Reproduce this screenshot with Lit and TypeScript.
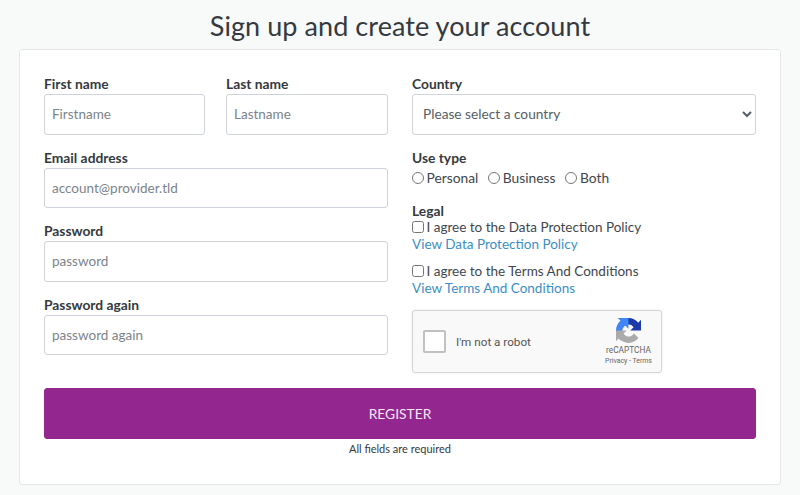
import { LitElement, html, css } from "lit";
import { customElement } from "lit/decorators.js";

@customElement("app-root")
export class AppRoot extends LitElement {
  static styles = css`
    :host { display: block; width: 800px; height: 495px; overflow: hidden; background: #f8f9f9; color: #343a40;
      font-family: "Lato", "Noto Sans", sans-serif; font-size: 14px; box-sizing: border-box; }
    * { box-sizing: border-box; }
    h1 { margin: 0; height: 49px; padding-top: 9px; font-size: 27px; line-height: 34px; font-weight: 400; text-align: center; color: #343a40; letter-spacing: 0.07px; }
    .card { margin: 0 19px; height: 435.5px; background: #fff; border: 1px solid #e4e7ea; border-radius: 3px; padding: 25px 24px 0; }
    .cols { display: grid; grid-template-columns: 344px 344px; column-gap: 24px; }
    .left { display: flex; flex-direction: column; }
    .pair { display: grid; grid-template-columns: 161px 162px; column-gap: 21px; }
    .field { display: flex; flex-direction: column; margin-bottom: 14px; }
    .t { font-weight: 700; font-size: 13.8px; line-height: 18px; margin-bottom: 1px; color: #343a40; display: block; }
    input.c, select { width: 100%; height: 40.5px; border: 1px solid #ced4da; border-radius: 3px; background: #fff; padding: 0 7px; font: inherit; font-size: 13.5px; color: #6c757d; outline: none; }
    input.c::placeholder { color: #7c848b; opacity: 1; }
    select { padding: 0 6px 2px; color: #565e66; font-size: 13.7px; }
    .lbl { display: inline-flex; align-items: center; font-size: 13.8px; color: #3f464d; line-height: 19px; }
    .radios { display: flex; gap: 10px; height: 20px; margin-bottom: 15.4px; }
    input[type=radio], input[type=checkbox] { margin: 0 2.5px 0 0; width: 12px; height: 12px; }
    .legal-t { line-height: 15px; margin-top: 2px; margin-bottom: 1px; }
    .rowc { display: flex; align-items: center; height: 17px; font-size: 13.5px; color: #3f464d; }
    a { color: #3b8fc7; text-decoration: none; font-size: 13.5px; line-height: 16px; display: block; margin-bottom: 11px; }
    .captcha { width: 250px; height: 63px; margin-top: 14.5px; background: #f9f9f9; border: 1px solid #d6d6d6; border-radius: 3px; box-shadow: 0 0 3px rgba(0,0,0,.08); display: flex; align-items: center; padding: 0 6.5px 0 10px; font-family: "Roboto", sans-serif; }
    .box { width: 23px; height: 23px; background: #fff; border: 2px solid #c1c1c1; border-radius: 2px; margin-right: 10px; }
    .rb { font-size: 11.7px; color: #555; }
    .brand { margin-left: auto; width: 52px; display: flex; flex-direction: column; align-items: center; color: #666; }
    .brand svg { width: 25px; height: 25px; margin-bottom: 2px; }
    .brand .n { font-size: 8.3px; line-height: 11px; }
    .brand .p { font-size: 6.9px; line-height: 10px; white-space: nowrap; }
    button { display: block; width: 100%; height: 51px; margin-top: 14.4px; background: #93278f; border: 1px solid #93278f; border-radius: 3px; color: #f6e6f5; font: inherit; font-size: 13.8px; text-transform: uppercase; }
    .note { text-align: center; font-size: 11px; line-height: 15px; margin-top: 2px; color: #343a40; }
  `;
  render() {
    return html`
      <h1>Sign up and create your account</h1>
      <div class="card">
        <div class="cols">
          <div class="left">
            <div class="pair">
              <div class="field"><label class="t">First name</label><input class="c" placeholder="Firstname" /></div>
              <div class="field"><label class="t">Last name</label><input class="c" placeholder="Lastname" /></div>
            </div>
            <div class="field"><label class="t">Email address</label><input class="c" placeholder="account@provider.tld" /></div>
            <div class="field"><label class="t">Password</label><input class="c" placeholder="password" /></div>
            <div class="field"><label class="t">Password again</label><input class="c" placeholder="password again" /></div>
          </div>
          <div>
            <div class="field"><label class="t">Country</label>
              <select><option>Please select a country</option></select>
            </div>
            <div class="t">Use type</div>
            <div class="radios">
              <label class="lbl"><input type="radio" name="u" />Personal</label>
              <label class="lbl"><input type="radio" name="u" />Business</label>
              <label class="lbl"><input type="radio" name="u" />Both</label>
            </div>
            <div class="t legal-t">Legal</div>
            <label class="rowc"><input type="checkbox" />I agree to the Data Protection Policy</label>
            <a href="#">View Data Protection Policy</a>
            <label class="rowc"><input type="checkbox" />I agree to the Terms And Conditions</label>
            <a href="#">View Terms And Conditions</a>
            <div class="captcha">
              <div class="box"></div>
              <span class="rb">I'm not a robot</span>
              <div class="brand">
                <svg viewBox="0 0 64 64">
                  <path d="M64 31.955l-.033-1.37V4.687l-7.16 7.16C50.948 4.674 42.033.093 32.05.093c-10.4 0-19.622 4.96-25.458 12.64l11.736 11.86a15.55 15.55 0 0 1 4.754-5.334c2.05-1.6 4.952-2.906 8.968-2.906.485 0 .86.057 1.135.163 4.976.393 9.288 3.14 11.828 7.124l-8.307 8.307 26.295.008" fill="#1c3aa9"/>
                  <path d="M31.862.002l-1.37.033H4.594l7.16 7.16C4.58 13.054-.001 21.97-.001 31.953c0 10.4 4.96 19.622 12.64 25.458L24.5 45.675a15.55 15.55 0 0 1-5.334-4.754c-1.6-2.05-2.906-4.952-2.906-8.968 0-.485.057-.86.163-1.135.393-4.976 3.14-9.288 7.124-11.828l8.307 8.307.008-26.295" fill="#4285f4"/>
                  <path d="M.002 31.953l.033 1.37v25.898l7.16-7.16c5.86 7.173 14.775 11.754 24.76 11.754 10.4 0 19.622-4.96 25.458-12.64L45.677 39.316a15.55 15.55 0 0 1-4.754 5.334c-2.05 1.6-4.952 2.906-8.968 2.906-.485 0-.86-.057-1.135-.163-4.976-.393-9.288-3.14-11.828-7.124l8.307-8.307-26.295-.008" fill="#ababab"/>
                </svg>
                <span class="n">reCAPTCHA</span>
                <span class="p">Privacy - Terms</span>
              </div>
            </div>
          </div>
        </div>
        <button>Register</button>
        <div class="note">All fields are required</div>
      </div>
    `;
  }
}
